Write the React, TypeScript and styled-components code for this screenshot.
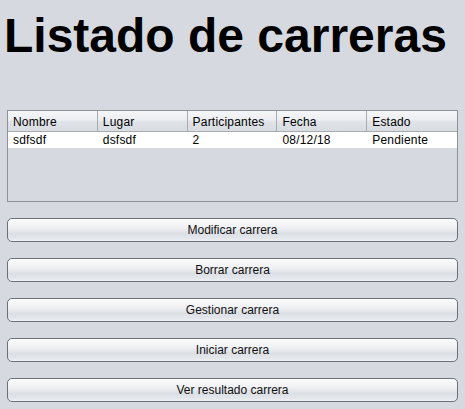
import React from "react";
import styled, { createGlobalStyle } from "styled-components";

const Global = createGlobalStyle`
  html, body { margin: 0; padding: 0; background: #d6d9df; }
  body { font-family: "Liberation Sans", Arial, sans-serif; }
`;

const Page = styled.div`
  width: 465px;
  height: 409px;
  box-sizing: border-box;
  padding: 0 7px 0 7px;
  display: flex;
  flex-direction: column;
  background: #d6d9df;
  overflow: hidden;
`;

const Title = styled.h1`
  margin: 0 0 0 -3px;
  padding-top: 7px;
  height: 110px;
  box-sizing: border-box;
  font-family: "Liberation Sans", Arial, sans-serif;
  font-weight: bold;
  font-size: 48px;
  line-height: 58px;
  color: #000;
  white-space: nowrap;
`;

const Table = styled.div`
  height: 92px;
  box-sizing: border-box;
  border: 1px solid #8e939b;
  background: #d6d9df;
  display: flex;
  flex-direction: column;
`;

const HeaderRow = styled.div`
  display: grid;
  grid-template-columns: repeat(5, 1fr);
  height: 21px;
  box-sizing: border-box;
  border-bottom: 1px solid #a6aab1;
  background: linear-gradient(#f5f6f8 0%, #eceef1 45%, #dfe2e7 55%, #d9dce1 100%);
`;

const HeaderCell = styled.div<{ $last?: boolean }>`
  box-sizing: border-box;
  padding-left: 5px;
  font-size: 12px;
  letter-spacing: 0.2px;
  line-height: 22px;
  color: #000;
  border-right: ${(p) => (p.$last ? "none" : "1px solid #a6aab1")};
`;

const DataRow = styled.div`
  display: grid;
  grid-template-columns: repeat(5, 1fr);
  height: 16px;
  background: #ffffff;
`;

const DataCell = styled.div`
  padding-left: 5px;
  font-size: 12px;
  letter-spacing: 0.2px;
  line-height: 17px;
  color: #000;
`;

const Buttons = styled.div`
  display: flex;
  flex-direction: column;
  gap: 16px;
  margin-top: 16px;
`;

const Button = styled.button`
  height: 24px;
  width: 100%;
  box-sizing: border-box;
  border: 1px solid #6b7079;
  border-radius: 5px;
  padding: 0;
  font-family: "Liberation Sans", Arial, sans-serif;
  font-size: 12px;
  line-height: 22px;
  color: #101010;
  background: linear-gradient(#fbfbfc 0%, #eff0f3 40%, #dcdfe4 65%, #e3e6ea 88%, #f1f3f6 100%);
  box-shadow: inset 0 1px 0 #ffffff;
  cursor: pointer;
`;

const cols = ["Nombre", "Lugar", "Participantes", "Fecha", "Estado"];
const row = ["sdfsdf", "dsfsdf", "2", "08/12/18", "Pendiente"];
const actions = [
  "Modificar carrera",
  "Borrar carrera",
  "Gestionar carrera",
  "Iniciar carrera",
  "Ver resultado carrera",
];

export default function App() {
  return (
    <>
      <Global />
      <Page>
        <Title>Listado de carreras</Title>
        <Table>
          <HeaderRow>
            {cols.map((c, i) => (
              <HeaderCell key={c} $last={i === cols.length - 1}>
                {c}
              </HeaderCell>
            ))}
          </HeaderRow>
          <DataRow>
            {row.map((c, i) => (
              <DataCell key={i}>{c}</DataCell>
            ))}
          </DataRow>
        </Table>
        <Buttons>
          {actions.map((a) => (
            <Button key={a}>{a}</Button>
          ))}
        </Buttons>
      </Page>
    </>
  );
}
